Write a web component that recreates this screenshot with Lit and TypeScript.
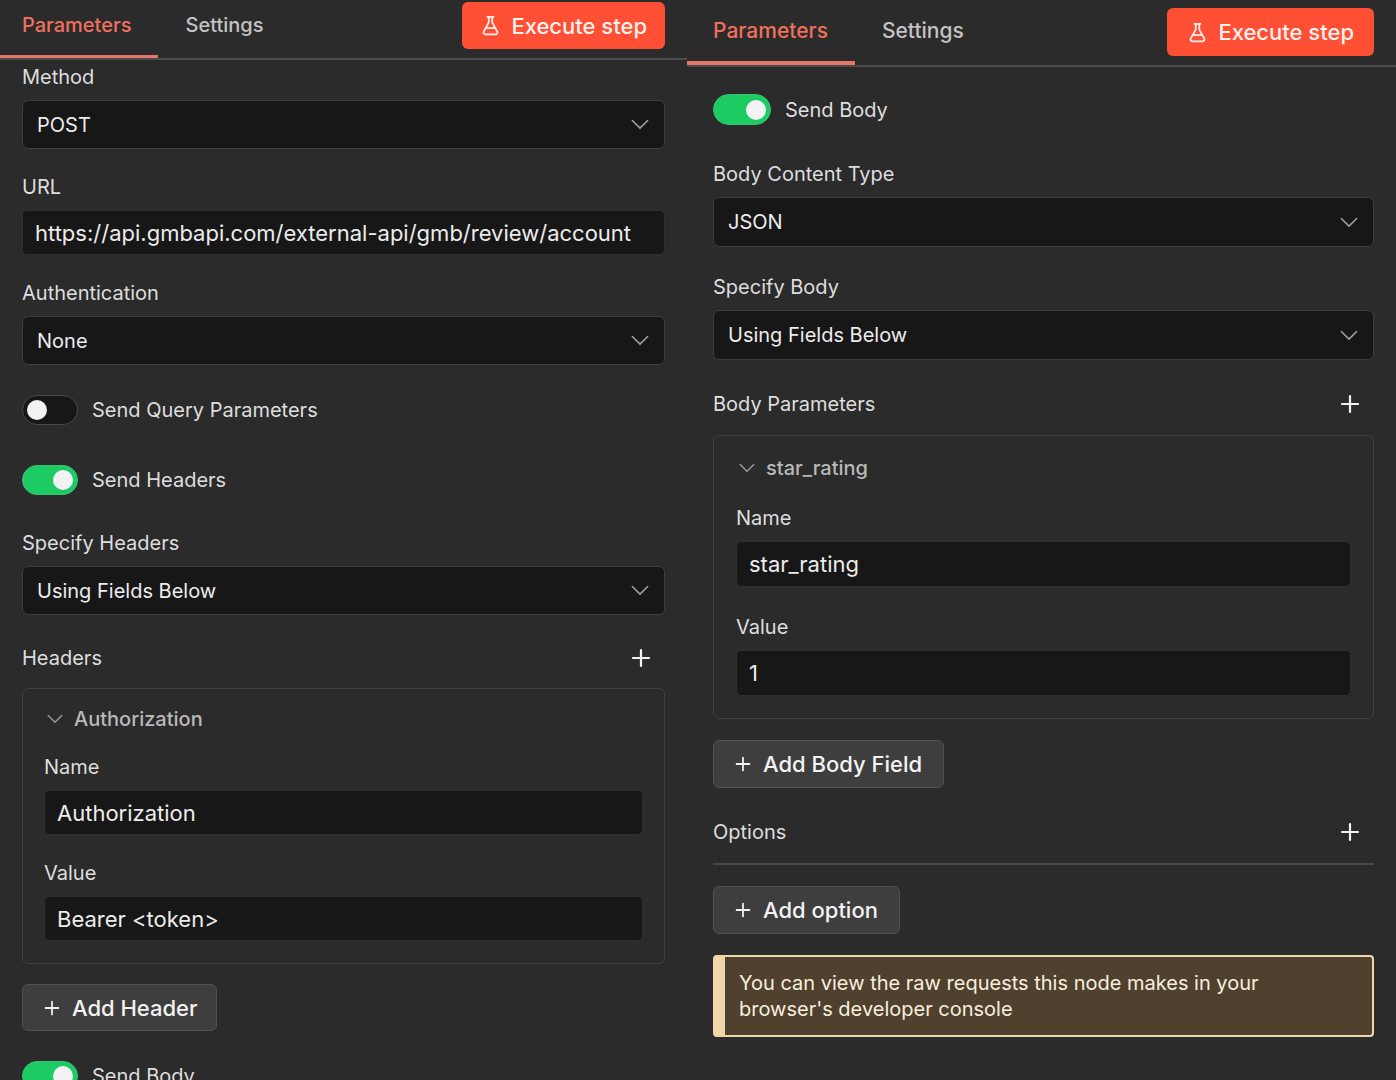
import { LitElement, html, css, svg } from "lit";
import { customElement, property } from "lit/decorators.js";

const chevron = (cls: string) => html`
  <svg class=${cls} viewBox="0 0 20 12" fill="none" aria-hidden="true">
    ${svg`<path d="M1.500 1.500l8.500 8.500 8.500-8.500" stroke="currentColor" stroke-width="1.700" stroke-linecap="round" stroke-linejoin="round" />`}
  </svg>
`;

const plus = (cls: string) => html`
  <svg class=${cls} viewBox="0 0 20 20" fill="none" aria-hidden="true">
    ${svg`<path d="M10 2v16M2 10h16" stroke="currentColor" stroke-width="2.200" stroke-linecap="round" />`}
  </svg>
`;

const flask = html`
  <svg class="flask" viewBox="0 0 24 24" fill="none" stroke="currentColor" stroke-width="2"
    stroke-linecap="round" stroke-linejoin="round" aria-hidden="true">
    ${svg`
      <path d="M14 2v6a2 2 0 0 0 .245.96l5.51 10.08A2 2 0 0 1 18 22H6a2 2 0 0 1-1.755-2.96l5.51-10.08A2 2 0 0 0 10 8V2" />
      <path d="M6.453 15h11.094" />
      <path d="M8.5 2h7" />
    `}
  </svg>
`;

const base = css`
  *,
  *::before {
    box-sizing: border-box;
  }
  button,
  input,
  select {
    font: inherit;
    color: inherit;
    margin: 0;
  }
  button {
    cursor: pointer;
  }
`;

@customElement("field-select")
class FieldSelect extends LitElement {
  @property() label = "";
  @property() value = "";

  static styles = [
    base,
    css`
      :host {
        display: flex;
        flex-direction: column;
        gap: 11px;
      }
      .label {
        line-height: 24px;
      }
      .box {
        display: grid;
        align-items: center;
      }
      .select {
        grid-area: 1 / 1;
        width: 100%;
        height: var(--select-height);
        padding: 0 48px 0 14px;
        appearance: none;
        border: 1px solid #3d3d3d;
        border-radius: 6px;
        background: #171717;
        color: #ececec;
      }
      .arrow {
        grid-area: 1 / 1;
        justify-self: end;
        width: 18px;
        height: 11px;
        margin-right: 16px;
        color: #a0a0a0;
        pointer-events: none;
      }
    `,
  ];

  render() {
    return html`
      <label class="label" for="control">${this.label}</label>
      <div class="box">
        <select class="select" id="control">
          <option>${this.value}</option>
        </select>
        ${chevron("arrow")}
      </div>
    `;
  }
}

@customElement("field-text")
class FieldText extends LitElement {
  @property() label = "";
  @property() value = "";

  static styles = [
    base,
    css`
      :host {
        display: flex;
        flex-direction: column;
        gap: 11px;
      }
      .label {
        line-height: 24px;
      }
      .input {
        width: 100%;
        height: var(--input-height);
        padding: 0 12px;
        border: 1px solid #2f2f2f;
        border-radius: 5px;
        background: #171717;
        color: #ececec;
        font-size: var(--large-size);
      }
    `,
  ];

  render() {
    return html`
      <label class="label" for="control">${this.label}</label>
      <input class="input" id="control" type="text" .value=${this.value} />
    `;
  }
}

@customElement("field-toggle")
class FieldToggle extends LitElement {
  @property() label = "";
  @property({ type: Boolean }) on = false;

  static styles = [
    base,
    css`
      :host {
        display: flex;
      }
      .row {
        display: flex;
        align-items: center;
        gap: 14px;
        line-height: 24px;
      }
      .switch {
        display: flex;
        align-items: center;
        width: var(--switch-width);
        height: var(--switch-height);
        padding: 0 4px;
        appearance: none;
        border: 1px solid #484848;
        border-radius: 16px;
        background: #171717;
      }
      .switch::before {
        content: "";
        width: 20px;
        height: 20px;
        border-radius: 50%;
        background: #f3f3f3;
      }
      .switch:checked {
        justify-content: flex-end;
        border-color: #3cc475;
        background: #1ccb62;
      }
    `,
  ];

  render() {
    return html`
      <label class="row">
        <input class="switch" type="checkbox" role="switch" .checked=${this.on} />
        <span>${this.label}</span>
      </label>
    `;
  }
}

@customElement("section-title")
class SectionTitle extends LitElement {
  @property() label = "";

  static styles = [
    base,
    css`
      :host {
        display: flex;
        align-items: center;
        justify-content: space-between;
        height: 24px;
        padding-right: 14px;
      }
      .add {
        display: flex;
        padding: 0;
        border: 0;
        background: none;
        color: #f2f2f2;
      }
      .plus {
        width: 20px;
        height: 20px;
      }
    `,
  ];

  render() {
    return html`
      <span>${this.label}</span>
      <button class="add" aria-label="Add to ${this.label}">${plus("plus")}</button>
    `;
  }
}

@customElement("add-button")
class AddButton extends LitElement {
  @property() label = "";

  static styles = [
    base,
    css`
      :host {
        display: flex;
      }
      .button {
        display: flex;
        align-items: center;
        gap: 12px;
        height: var(--button-height);
        padding: 0 var(--button-end) 0 21px;
        border: 1px solid #505050;
        border-radius: 6px;
        background: #3e3e3e;
        color: #f2f2f2;
        font-size: var(--large-size);
        font-weight: 500;
      }
      .plus {
        width: 16px;
        height: 16px;
      }
    `,
  ];

  render() {
    return html`<button class="button">${plus("plus")}<span>${this.label}</span></button>`;
  }
}

@customElement("field-group")
class FieldGroup extends LitElement {
  @property() label = "";

  static styles = [
    base,
    css`
      :host {
        display: flex;
        flex-direction: column;
        gap: var(--field-gap);
        padding: var(--group-top) var(--group-pad) 22px;
        border: 1px solid #404040;
        border-radius: 6px;
      }
      .title {
        display: flex;
        align-items: center;
        align-self: flex-start;
        gap: 11px;
        height: 24px;
        padding: 0;
        margin: 0 0 -2px 3px;
        border: 0;
        background: none;
        color: #b9b9b9;
        font-weight: 500;
      }
      .arrow {
        width: 16px;
        height: 10px;
        color: #9c9c9c;
      }
    `,
  ];

  render() {
    return html`
      <button class="title" aria-expanded="true">${chevron("arrow")}<span>${this.label}</span></button>
      <slot></slot>
    `;
  }
}

@customElement("panel-header")
class PanelHeader extends LitElement {
  static styles = [
    base,
    css`
      :host {
        display: flex;
        flex: none;
        align-items: flex-start;
        justify-content: space-between;
        height: var(--header-height);
        padding-right: 22px;
        border-bottom: 2px solid #4b4b4b;
        font-weight: 500;
      }
      .tabs {
        display: flex;
        align-self: stretch;
      }
      .tab {
        padding: 0 27px var(--tab-drop);
        border: 0;
        border-bottom: var(--tab-line) solid transparent;
        background: none;
        color: #c3c3c3;
        font-size: var(--tab-size);
        font-weight: 500;
      }
      .active {
        padding-left: var(--panel-left);
        border-color: #e5776a;
        color: #f0705e;
      }
      .execute {
        display: flex;
        align-items: center;
        gap: 10px;
        height: var(--button-height);
        margin-top: var(--execute-top);
        padding: 0 var(--execute-pad);
        border: 0;
        border-radius: 6px;
        background: #ff4f35;
        color: #fff2ee;
        font-size: var(--large-size);
        font-weight: 500;
      }
      .flask {
        width: 21px;
        height: 21px;
      }
    `,
  ];

  render() {
    return html`
      <div class="tabs" role="tablist">
        <button class="tab active" role="tab" aria-selected="true">Parameters</button>
        <button class="tab" role="tab" aria-selected="false">Settings</button>
      </div>
      <button class="execute">${flask}<span>Execute step</span></button>
    `;
  }
}

@customElement("app-root")
class AppRoot extends LitElement {
  static styles = [
    base,
    css`
      :host {
        display: grid;
        grid-template-columns: 687fr 709fr;
        height: 100vh;
        overflow: hidden;
        background: #2b2b2b;
        color: #dedede;
        font-family: Inter, "Liberation Sans", sans-serif;
      }
      .panel {
        display: flex;
        flex-direction: column;
        min-width: 0;
        min-height: 0;
        font-size: 20px;
      }
      .request {
        --tab-size: 20px;
        --large-size: 22px;
        --panel-left: 22px;
        --header-height: 60px;
        --tab-line: 3px;
        --tab-drop: 6px;
        --execute-top: 2px;
        --execute-pad: 18px;
        --select-height: 49px;
        --input-height: 45px;
        --button-height: 47px;
        --button-end: 18px;
        --switch-width: 56px;
        --switch-height: 30px;
        --field-gap: 26px;
        --group-top: 18px;
        --group-pad: 21px;
      }
      .payload {
        --tab-size: 21px;
        --large-size: 22px;
        --panel-left: 26px;
        --header-height: 67px;
        --tab-line: 4px;
        --tab-drop: 0px;
        --execute-top: 8px;
        --execute-pad: 20px;
        --select-height: 50px;
        --input-height: 46px;
        --button-height: 48px;
        --button-end: 21px;
        --switch-width: 58px;
        --switch-height: 31px;
        --field-gap: 28px;
        --group-top: 20px;
        --group-pad: 22px;
      }
      .body {
        display: flex;
        flex: 1;
        flex-direction: column;
        gap: 20px;
        min-height: 0;
        overflow-y: auto;
        scrollbar-width: none;
        padding: 5px 22px 0 var(--panel-left);
      }
      .payload .body {
        gap: 21px;
        padding-top: 17px;
      }
      .body > * {
        flex: none;
      }
      .fields {
        display: flex;
        flex-direction: column;
        gap: var(--field-gap);
      }
      .switches {
        display: flex;
        flex-direction: column;
        gap: 40px;
        padding: 10px 0 16px;
      }
      .list {
        display: flex;
        flex-direction: column;
        gap: 18px;
        padding-top: 11px;
      }
      .payload .list {
        gap: 19px;
      }
      .rule {
        width: 100%;
        height: 2px;
        margin: 0;
        border: 0;
        background: #484848;
      }
      .notice {
        margin: 0;
        padding: 13px 40px 13px 14px;
        border: 2px solid #f0d6a8;
        border-left-width: 12px;
        border-radius: 4px;
        background: #4f412e;
        color: #f8efdf;
        line-height: 26px;
      }
    `,
  ];

  render() {
    return html`
      <section class="panel request">
        <panel-header></panel-header>
        <div class="body">
          <div class="fields">
            <field-select label="Method" value="POST"></field-select>
            <field-text label="URL" value="https://api.gmbapi.com/external-api/gmb/review/account"></field-text>
            <field-select label="Authentication" value="None"></field-select>
          </div>
          <div class="switches">
            <field-toggle label="Send Query Parameters"></field-toggle>
            <field-toggle label="Send Headers" on></field-toggle>
          </div>
          <field-select label="Specify Headers" value="Using Fields Below"></field-select>
          <div class="list">
            <section-title label="Headers"></section-title>
            <field-group label="Authorization">
              <field-text label="Name" value="Authorization"></field-text>
              <field-text label="Value" value="Bearer <token>"></field-text>
            </field-group>
          </div>
          <add-button label="Add Header"></add-button>
          <div class="switches">
            <field-toggle label="Send Body" on></field-toggle>
          </div>
        </div>
      </section>

      <section class="panel payload">
        <panel-header></panel-header>
        <div class="body">
          <div class="switches">
            <field-toggle label="Send Body" on></field-toggle>
          </div>
          <div class="fields">
            <field-select label="Body Content Type" value="JSON"></field-select>
            <field-select label="Specify Body" value="Using Fields Below"></field-select>
          </div>
          <div class="list">
            <section-title label="Body Parameters"></section-title>
            <field-group label="star_rating">
              <field-text label="Name" value="star_rating"></field-text>
              <field-text label="Value" value="1"></field-text>
            </field-group>
          </div>
          <add-button label="Add Body Field"></add-button>
          <div class="list">
            <section-title label="Options"></section-title>
            <hr class="rule" />
          </div>
          <add-button label="Add option"></add-button>
          <p class="notice">You can view the raw requests this node makes in your browser's developer console</p>
        </div>
      </section>
    `;
  }
}
